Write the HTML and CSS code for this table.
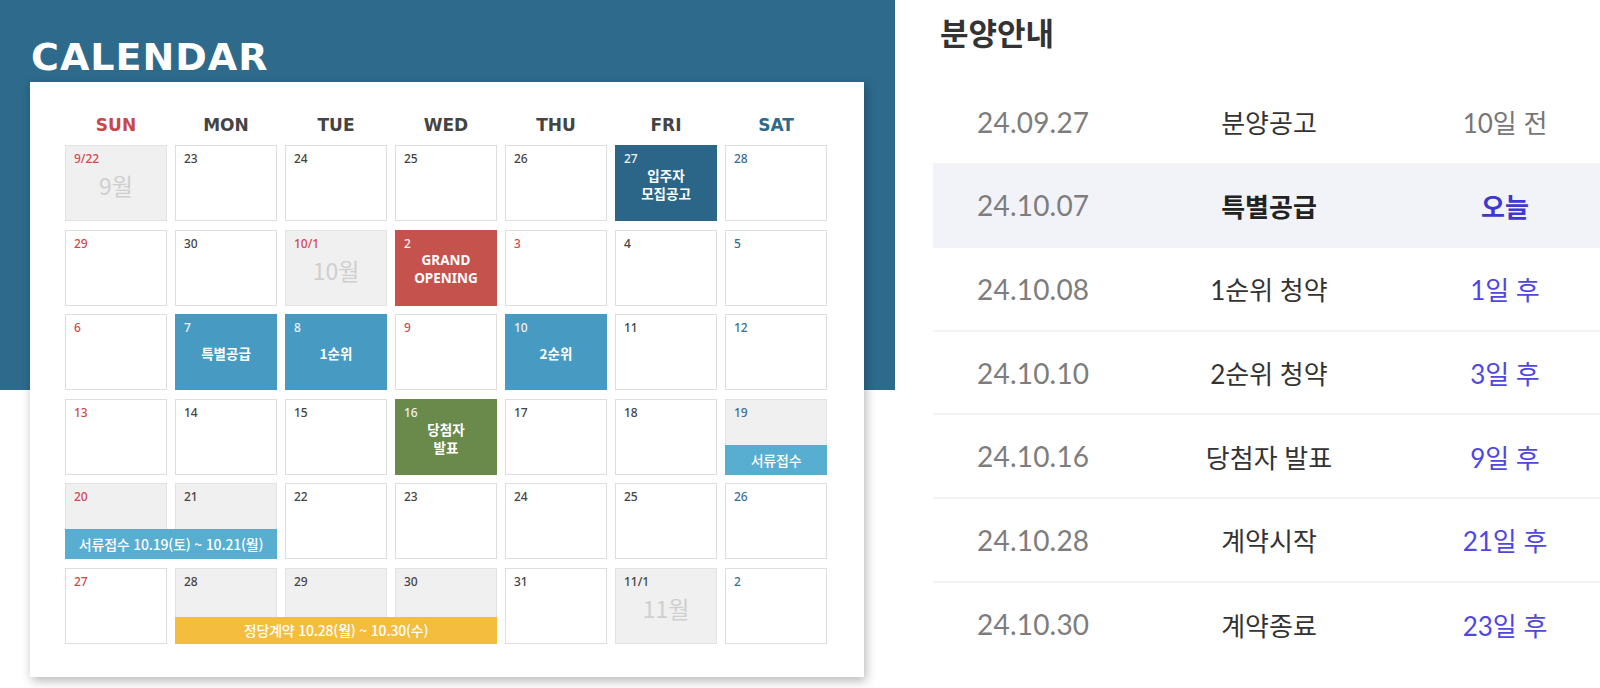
FILE: index.html
```html
<!DOCTYPE html>
<html lang="ko">
<head>
<meta charset="utf-8">
<title>Calendar</title>
<link rel="stylesheet" href="styles.css">
</head>
<body>
<div class="page">
  <section class="cal-section">
    <h1 class="cal-title">CALENDAR</h1>
    <div class="card">
      <div class="dow">
        <div class="sun">SUN</div><div>MON</div><div>TUE</div><div>WED</div><div>THU</div><div>FRI</div><div class="sat">SAT</div>
      </div>
      <div class="weeks">
        <div class="week">
          <div class="cell gray"><span class="num red">9/22</span><span class="month">9월</span></div>
          <div class="cell"><span class="num">23</span></div>
          <div class="cell"><span class="num">24</span></div>
          <div class="cell"><span class="num">25</span></div>
          <div class="cell"><span class="num">26</span></div>
          <div class="cell ev-navy"><span class="num">27</span><span class="label">입주자<br>모집공고</span></div>
          <div class="cell"><span class="num blue">28</span></div>
        </div>
        <div class="week">
          <div class="cell"><span class="num red">29</span></div>
          <div class="cell"><span class="num">30</span></div>
          <div class="cell gray"><span class="num red">10/1</span><span class="month">10월</span></div>
          <div class="cell ev-red"><span class="num">2</span><span class="label latin">GRAND<br>OPENING</span></div>
          <div class="cell"><span class="num red">3</span></div>
          <div class="cell"><span class="num">4</span></div>
          <div class="cell"><span class="num blue">5</span></div>
        </div>
        <div class="week">
          <div class="cell"><span class="num red">6</span></div>
          <div class="cell ev-sky"><span class="num">7</span><span class="label">특별공급</span></div>
          <div class="cell ev-sky"><span class="num">8</span><span class="label">1순위</span></div>
          <div class="cell"><span class="num red">9</span></div>
          <div class="cell ev-sky"><span class="num">10</span><span class="label">2순위</span></div>
          <div class="cell"><span class="num">11</span></div>
          <div class="cell"><span class="num blue">12</span></div>
        </div>
        <div class="week">
          <div class="cell"><span class="num red">13</span></div>
          <div class="cell"><span class="num">14</span></div>
          <div class="cell"><span class="num">15</span></div>
          <div class="cell ev-green"><span class="num">16</span><span class="label">당첨자<br>발표</span></div>
          <div class="cell"><span class="num">17</span></div>
          <div class="cell"><span class="num">18</span></div>
          <div class="cell gray"><span class="num blue">19</span></div>
          <div class="bar bar-doc bar-sat">서류접수</div>
        </div>
        <div class="week">
          <div class="cell gray"><span class="num red">20</span></div>
          <div class="cell gray"><span class="num">21</span></div>
          <div class="cell"><span class="num">22</span></div>
          <div class="cell"><span class="num">23</span></div>
          <div class="cell"><span class="num">24</span></div>
          <div class="cell"><span class="num">25</span></div>
          <div class="cell"><span class="num blue">26</span></div>
          <div class="bar bar-doc bar-sunmon">서류접수 10.19(토) ~ 10.21(월)</div>
        </div>
        <div class="week">
          <div class="cell"><span class="num red">27</span></div>
          <div class="cell gray"><span class="num">28</span></div>
          <div class="cell gray"><span class="num">29</span></div>
          <div class="cell gray"><span class="num">30</span></div>
          <div class="cell"><span class="num">31</span></div>
          <div class="cell gray"><span class="num">11/1</span><span class="month">11월</span></div>
          <div class="cell"><span class="num blue">2</span></div>
          <div class="bar bar-contract bar-monwed">정당계약 10.28(월) ~ 10.30(수)</div>
        </div>
      </div>
    </div>
  </section>

  <section class="info">
    <h2 class="info-title">분양안내</h2>
    <div class="rows">
      <div class="row"><span class="date">24.09.27</span><span class="name">분양공고</span><span class="when past">10일 전</span></div>
      <div class="row today"><span class="date">24.10.07</span><span class="name">특별공급</span><span class="when">오늘</span></div>
      <div class="row"><span class="date">24.10.08</span><span class="name">1순위 청약</span><span class="when">1일 후</span></div>
      <div class="row"><span class="date">24.10.10</span><span class="name">2순위 청약</span><span class="when">3일 후</span></div>
      <div class="row"><span class="date">24.10.16</span><span class="name">당첨자 발표</span><span class="when">9일 후</span></div>
      <div class="row"><span class="date">24.10.28</span><span class="name">계약시작</span><span class="when">21일 후</span></div>
      <div class="row"><span class="date">24.10.30</span><span class="name">계약종료</span><span class="when">23일 후</span></div>
    </div>
  </section>
</div>
</body>
</html>
```

FILE: styles.css
```css
* { box-sizing: border-box; }
html, body { margin: 0; padding: 0; background: #fff; }
body { width: 1600px; height: 688px; overflow: hidden; }

.page {
  display: flex;
  align-items: flex-start;
}

/* ---------- calendar ---------- */
.cal-section {
  width: 895px;
  flex: none;
  padding: 36px 0 0 30px;
  background: linear-gradient(#2d6a8c, #2d6a8c) no-repeat top left / 100% 390px;
}
.cal-title {
  margin: 0 0 4px 1px;
  font-family: "DejaVu Sans", sans-serif;
  font-weight: 700;
  font-size: 38px;
  line-height: 42px;
  letter-spacing: 1px;
  color: #fff;
}
.card {
  width: 834px;
  background: #fff;
  padding: 31px 0 33px 35px;
  box-shadow: 2px 4px 10px rgba(0, 0, 0, 0.28);
  font-family: "Noto Sans", "Noto Sans CJK KR", sans-serif;
}
.dow {
  display: grid;
  grid-template-columns: repeat(7, 102px);
  column-gap: 8px;
  margin-bottom: 8px;
  font-family: "DejaVu Sans", sans-serif;
  font-weight: 700;
  font-size: 17px;
  line-height: 24px;
  text-align: center;
  color: #444;
}
.dow .sun { color: #c8484a; }
.dow .sat { color: #2d6a8c; }

.weeks {
  display: flex;
  flex-direction: column;
  gap: 8.6px;
}
.week {
  display: grid;
  grid-template-columns: repeat(7, 102px);
  grid-template-rows: 76px;
  column-gap: 8px;
}
.week > .cell:nth-child(1) { grid-area: 1 / 1; }
.week > .cell:nth-child(2) { grid-area: 1 / 2; }
.week > .cell:nth-child(3) { grid-area: 1 / 3; }
.week > .cell:nth-child(4) { grid-area: 1 / 4; }
.week > .cell:nth-child(5) { grid-area: 1 / 5; }
.week > .cell:nth-child(6) { grid-area: 1 / 6; }
.week > .cell:nth-child(7) { grid-area: 1 / 7; }

.cell {
  display: grid;
  grid-template: 1fr / 1fr;
  border: 1px solid #dedede;
  background: #fff;
  padding: 6px 8px;
}
.cell > * { grid-area: 1 / 1; }
.cell.gray { background: #f0f0f0; border-color: #e2e2e2; }

.num {
  align-self: start;
  justify-self: start;
  font-size: 12px;
  line-height: 14px;
  font-weight: 500;
  color: #444;
}
.num.red { color: #cf4a4e; }
.num.blue { color: #3b6f91; }

.label {
  align-self: center;
  justify-self: center;
  margin-top: 2px;
  font-family: "Noto Sans CJK KR", sans-serif;
  font-size: 13.5px;
  line-height: 18px;
  font-weight: 700;
  text-align: center;
  color: #fff;
}
.label.latin { font-family: "Noto Sans", sans-serif; font-size: 13.5px; }

.month {
  align-self: center;
  justify-self: center;
  margin-top: 4px;
  font-family: "Noto Sans CJK KR", sans-serif;
  font-size: 23px;
  line-height: 26px;
  color: #cfcfcf;
}

.ev-navy { background: #2b6689; border-color: #2b6689; }
.ev-red { background: #c5524c; border-color: #c5524c; }
.ev-sky { background: #479bc2; border-color: #479bc2; }
.ev-green { background: #6a8a4b; border-color: #6a8a4b; }
.ev-navy .num, .ev-red .num, .ev-sky .num, .ev-green .num { color: #f1f1f1; }

.bar {
  grid-row: 1;
  align-self: end;
  display: flex;
  align-items: center;
  justify-content: center;
  font-family: "Noto Sans CJK KR", sans-serif;
  font-size: 14px;
  font-weight: 500;
  letter-spacing: -0.2px;
  color: #fff;
}
.bar-doc { background: #58aed1; height: 30px; }
.bar-contract { background: #f5bd3e; height: 27px; }
.bar-sat { grid-column: 7 / 8; }
.bar-sunmon { grid-column: 1 / 3; }
.bar-monwed { grid-column: 2 / 5; }

/* ---------- info list ---------- */
.info {
  flex: 1;
  padding: 11px 0 0 38px;
  font-family: "Lato", "Noto Sans CJK KR", sans-serif;
}
.info-title {
  margin: 0 0 28px 7px;
  font-family: "Noto Sans CJK KR", sans-serif;
  font-size: 31px;
  line-height: 42px;
  font-weight: 700;
  color: #333;
}
.row {
  display: grid;
  grid-template-columns: 151px 282px 190px;
  align-items: center;
  height: 83.6px;
  padding-left: 44px;
  border-bottom: 2px solid #f3f3f3;
}
.row:last-child { border-bottom: none; }
.row.today { background: #f2f2f9; border-bottom-color: #f2f2f9; }
.date {
  font-size: 28px;
  color: #7d7d7d;
  letter-spacing: 0.2px;
}
.name {
  text-align: center;
  font-size: 26px;
  color: #333;
}
.when {
  text-align: center;
  font-size: 26px;
  color: #5047e2;
}
.when.past { color: #777; }
.today .name { font-weight: 700; color: #222; }
.today .when { font-weight: 700; color: #3f37d2; }
```
